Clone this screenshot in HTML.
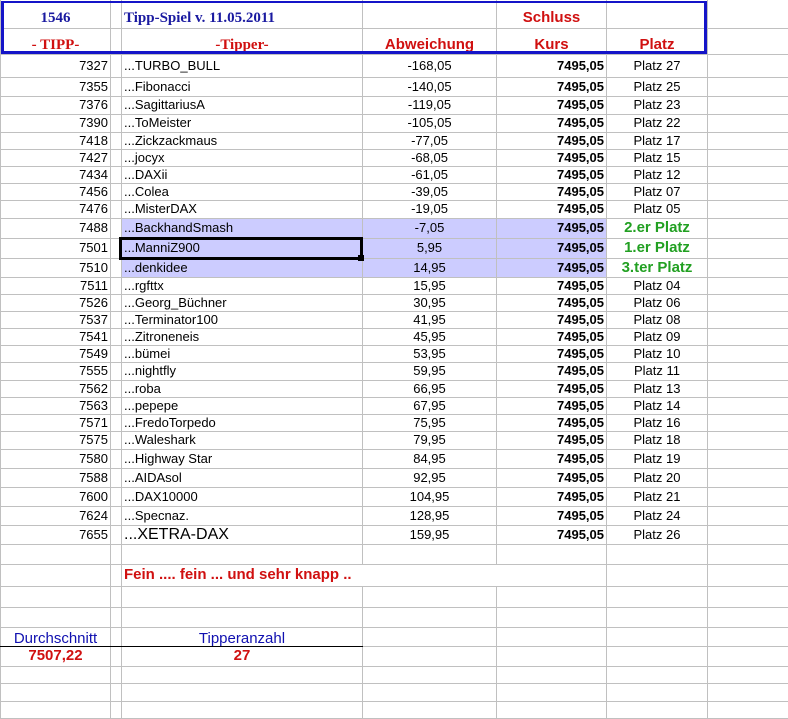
<!DOCTYPE html>
<html><head><meta charset="utf-8"><style>
body{margin:0;background:#fff;width:788px;height:718px;overflow:hidden;position:relative;font-family:"Liberation Sans",Arial,sans-serif;font-size:13px;color:#000}
table{border-collapse:collapse;table-layout:fixed;position:absolute;left:0;top:0;width:788px}
td{border-right:1px solid #c0c0c0;border-bottom:1px solid #c0c0c0;padding:0 2px;white-space:nowrap;overflow:visible;line-height:14px}
td:first-child{border-left:1px solid #c0c0c0}
.r{text-align:right}.c{text-align:center}
.k{font-weight:bold;text-align:right}
.h{background:#ccccff}
.g{color:#22a022;font-weight:bold;font-size:15px;text-align:center}
.sb{font-family:"Liberation Serif",serif;font-weight:bold;color:#1a1aa0;font-size:15px}
.sr{font-family:"Liberation Serif",serif;font-weight:bold;color:#d01010;font-size:15px}
.hr{font-weight:bold;color:#d01010;font-size:15px;text-align:center}
.nb{padding:0}
.hd td{vertical-align:bottom;padding-bottom:3px}
.hd2 td{vertical-align:bottom;padding-bottom:2px}
</style></head><body>
<table>
<colgroup><col style="width:110px"><col style="width:11px"><col style="width:241px"><col style="width:134px"><col style="width:110px"><col style="width:101px"><col style="width:81px"></colgroup>
<tr class="hd" style="height:28px"><td class="sb c">1546</td><td class="nb"></td><td class="sb">Tipp-Spiel v. 11.05.2011</td><td></td><td class="hr">Schluss</td><td></td><td></td></tr>
<tr class="hd2" style="height:26px"><td class="sr c">- TIPP-</td><td class="nb"></td><td class="sr c">-Tipper-</td><td class="hr">Abweichung</td><td class="hr">Kurs</td><td class="hr">Platz</td><td></td></tr>
<tr style="height:23px"><td class="r">7327</td><td class="nb"></td><td>...TURBO_BULL</td><td class="c">-168,05</td><td class="k">7495,05</td><td class="c">Platz 27</td><td></td></tr>
<tr style="height:19px"><td class="r">7355</td><td class="nb"></td><td>...Fibonacci</td><td class="c">-140,05</td><td class="k">7495,05</td><td class="c">Platz 25</td><td></td></tr>
<tr style="height:18px"><td class="r">7376</td><td class="nb"></td><td>...SagittariusA</td><td class="c">-119,05</td><td class="k">7495,05</td><td class="c">Platz 23</td><td></td></tr>
<tr style="height:18px"><td class="r">7390</td><td class="nb"></td><td>...ToMeister</td><td class="c">-105,05</td><td class="k">7495,05</td><td class="c">Platz 22</td><td></td></tr>
<tr style="height:17px"><td class="r">7418</td><td class="nb"></td><td>...Zickzackmaus</td><td class="c">-77,05</td><td class="k">7495,05</td><td class="c">Platz 17</td><td></td></tr>
<tr style="height:17px"><td class="r">7427</td><td class="nb"></td><td>...jocyx</td><td class="c">-68,05</td><td class="k">7495,05</td><td class="c">Platz 15</td><td></td></tr>
<tr style="height:17px"><td class="r">7434</td><td class="nb"></td><td>...DAXii</td><td class="c">-61,05</td><td class="k">7495,05</td><td class="c">Platz 12</td><td></td></tr>
<tr style="height:17px"><td class="r">7456</td><td class="nb"></td><td>...Colea</td><td class="c">-39,05</td><td class="k">7495,05</td><td class="c">Platz 07</td><td></td></tr>
<tr style="height:18px"><td class="r">7476</td><td class="nb"></td><td>...MisterDAX</td><td class="c">-19,05</td><td class="k">7495,05</td><td class="c">Platz 05</td><td></td></tr>
<tr style="height:20px"><td class="r">7488</td><td class="nb"></td><td class="h">...BackhandSmash</td><td class="c h">-7,05</td><td class="k h">7495,05</td><td class="g">2.er Platz</td><td></td></tr>
<tr style="height:20px"><td class="r">7501</td><td class="nb"></td><td class="h">...ManniZ900</td><td class="c h">5,95</td><td class="k h">7495,05</td><td class="g">1.er Platz</td><td></td></tr>
<tr style="height:19px"><td class="r">7510</td><td class="nb"></td><td class="h">...denkidee</td><td class="c h">14,95</td><td class="k h">7495,05</td><td class="g">3.ter Platz</td><td></td></tr>
<tr style="height:17px"><td class="r">7511</td><td class="nb"></td><td>...rgfttx</td><td class="c">15,95</td><td class="k">7495,05</td><td class="c">Platz 04</td><td></td></tr>
<tr style="height:17px"><td class="r">7526</td><td class="nb"></td><td>...Georg_Büchner</td><td class="c">30,95</td><td class="k">7495,05</td><td class="c">Platz 06</td><td></td></tr>
<tr style="height:17px"><td class="r">7537</td><td class="nb"></td><td>...Terminator100</td><td class="c">41,95</td><td class="k">7495,05</td><td class="c">Platz 08</td><td></td></tr>
<tr style="height:17px"><td class="r">7541</td><td class="nb"></td><td>...Zitroneneis</td><td class="c">45,95</td><td class="k">7495,05</td><td class="c">Platz 09</td><td></td></tr>
<tr style="height:17px"><td class="r">7549</td><td class="nb"></td><td>...bümei</td><td class="c">53,95</td><td class="k">7495,05</td><td class="c">Platz 10</td><td></td></tr>
<tr style="height:18px"><td class="r">7555</td><td class="nb"></td><td>...nightfly</td><td class="c">59,95</td><td class="k">7495,05</td><td class="c">Platz 11</td><td></td></tr>
<tr style="height:17px"><td class="r">7562</td><td class="nb"></td><td>...roba</td><td class="c">66,95</td><td class="k">7495,05</td><td class="c">Platz 13</td><td></td></tr>
<tr style="height:17px"><td class="r">7563</td><td class="nb"></td><td>...pepepe</td><td class="c">67,95</td><td class="k">7495,05</td><td class="c">Platz 14</td><td></td></tr>
<tr style="height:17px"><td class="r">7571</td><td class="nb"></td><td>...FredoTorpedo</td><td class="c">75,95</td><td class="k">7495,05</td><td class="c">Platz 16</td><td></td></tr>
<tr style="height:18px"><td class="r">7575</td><td class="nb"></td><td>...Waleshark</td><td class="c">79,95</td><td class="k">7495,05</td><td class="c">Platz 18</td><td></td></tr>
<tr style="height:19px"><td class="r">7580</td><td class="nb"></td><td>...Highway Star</td><td class="c">84,95</td><td class="k">7495,05</td><td class="c">Platz 19</td><td></td></tr>
<tr style="height:19px"><td class="r">7588</td><td class="nb"></td><td>...AIDAsol</td><td class="c">92,95</td><td class="k">7495,05</td><td class="c">Platz 20</td><td></td></tr>
<tr style="height:19px"><td class="r">7600</td><td class="nb"></td><td>...DAX10000</td><td class="c">104,95</td><td class="k">7495,05</td><td class="c">Platz 21</td><td></td></tr>
<tr style="height:19px"><td class="r">7624</td><td class="nb"></td><td>...Specnaz.</td><td class="c">128,95</td><td class="k">7495,05</td><td class="c">Platz 24</td><td></td></tr>
<tr style="height:19px"><td class="r">7655</td><td class="nb"></td><td style="font-size:16px">...XETRA-DAX</td><td class="c">159,95</td><td class="k">7495,05</td><td class="c">Platz 26</td><td></td></tr>
<tr style="height:20px"><td></td><td class="nb"></td><td></td><td></td><td></td><td></td><td></td></tr>
<tr style="height:22px"><td></td><td class="nb"></td><td style="color:#d01010;font-weight:bold;font-size:15px;border-right:none">Fein .... fein ... und sehr knapp ..</td><td style="border-right:none"></td><td></td><td></td><td></td></tr>
<tr style="height:21px"><td></td><td class="nb"></td><td></td><td></td><td></td><td></td><td></td></tr>
<tr style="height:20px"><td></td><td class="nb"></td><td></td><td></td><td></td><td></td><td></td></tr>
<tr style="height:19px"><td class="c" style="color:#1010b0;font-size:15px;border-bottom:1px solid #000;vertical-align:bottom">Durchschnitt</td><td class="nb" style="border-bottom:1px solid #000"></td><td class="c" style="color:#1010b0;font-size:15px;border-bottom:1px solid #000;vertical-align:bottom">Tipperanzahl</td><td></td><td></td><td></td><td></td></tr>
<tr style="height:20px"><td class="c" style="color:#d01010;font-weight:bold;font-size:15px">7507,22</td><td class="nb"></td><td class="c" style="color:#d01010;font-weight:bold;font-size:15px">27</td><td></td><td></td><td></td><td></td></tr>
<tr style="height:17px"><td></td><td class="nb"></td><td></td><td></td><td></td><td></td><td></td></tr>
<tr style="height:18px"><td></td><td class="nb"></td><td></td><td></td><td></td><td></td><td></td></tr>
<tr style="height:17px"><td></td><td class="nb"></td><td></td><td></td><td></td><td></td><td></td></tr>
</table>
<div style="position:absolute;left:1px;top:1px;width:700px;height:48px;border:3px solid #1414c8;border-top-width:2px"></div>
<div style="position:absolute;left:119px;top:237px;width:238px;height:17px;border:3px solid #000"></div>
<div style="position:absolute;left:358px;top:255px;width:6px;height:6px;background:#000"></div>
</body></html>
